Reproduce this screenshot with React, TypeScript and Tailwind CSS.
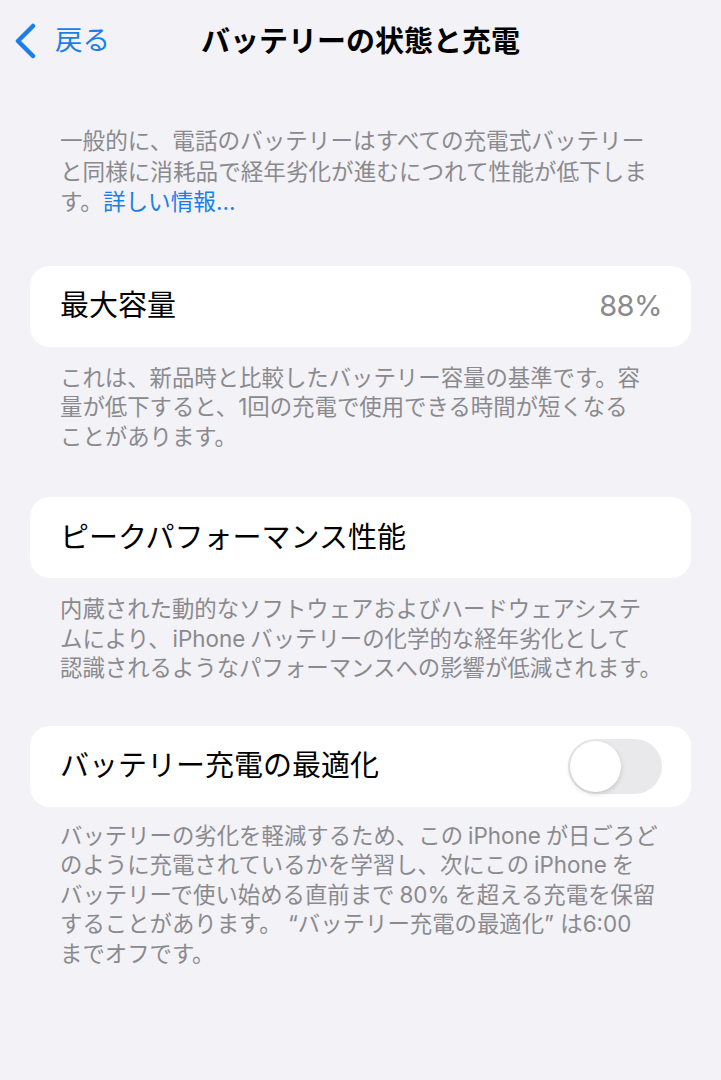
import React from "react";

const font = { fontFamily: 'Inter, "Noto Sans CJK JP", sans-serif' };

function Card({ children }: { children: React.ReactNode }) {
  return (
    <div className="mx-[30px] h-[81px] rounded-[20px] bg-white pl-[30px] pr-[29px] flex items-center justify-between">
      {children}
    </div>
  );
}

function Foot({ lines }: { lines: React.ReactNode[] }) {
  return (
    <div className="px-[60px] text-[22.4px] leading-[29.5px] text-[#8a8a8e] whitespace-nowrap">
      {lines.map((l, i) => (
        <div key={i}>{l}</div>
      ))}
    </div>
  );
}

function L({ children, left = 5 }: { children: React.ReactNode; left?: number }) {
  return <span className={left === 5 ? "px-[5px]" : "pl-[2px] pr-[5px]"}>{children}</span>;
}

export default function App() {
  return (
    <div className="w-[721px] h-[1080px] bg-[#f2f2f7] overflow-hidden" style={font}>
      <div className="h-[82px] grid grid-cols-[1fr_auto_1fr] items-center">
        <div className="flex items-center pl-[15px]">
          <svg width="22" height="36" viewBox="0 0 22 36" fill="none">
            <path d="M18 3 L3 18 L18 33" stroke="#1c7ee8" strokeWidth="4.5" strokeLinecap="round" strokeLinejoin="round" />
          </svg>
          <span className="ml-[18px] text-[27.5px] text-[#1c7ee8] leading-none">戻る</span>
        </div>
        <div className="text-[29px] font-bold text-black leading-none">バッテリーの状態と充電</div>
        <div />
      </div>

      <div className="mt-[44px] px-[60px] text-[22.6px] leading-[30.5px] text-[#8a8a8e] whitespace-nowrap">
        <div>一般的に、電話のバッテリーはすべての充電式バッテリー</div>
        <div>と同様に消耗品で経年劣化が進むにつれて性能が低下しま</div>
        <div>
          す。<span className="text-[#1c7ee8]">詳しい情報...</span>
        </div>
      </div>

      <div className="mt-[48px]">
        <Card>
          <span className="text-[29px] text-black">最大容量</span>
          <span className="text-[29px] text-[#8a8a8e] tracking-[-0.5px]">88%</span>
        </Card>
      </div>
      <div className="mt-[16px]">
        <Foot
          lines={[
            "これは、新品時と比較したバッテリー容量の基準です。容",
            "量が低下すると、1回の充電で使用できる時間が短くなる",
            "ことがあります。",
          ]}
        />
      </div>

      <div className="mt-[46px]">
        <Card>
          <span className="text-[29px] text-black">ピークパフォーマンス性能</span>
        </Card>
      </div>
      <div className="mt-[16px]">
        <Foot
          lines={[
            "内蔵された動的なソフトウェアおよびハードウェアシステ",
            <>
              ムにより、<L left={2}>iPhone</L>バッテリーの化学的な経年劣化として
            </>,
            "認識されるようなパフォーマンスへの影響が低減されます。",
          ]}
        />
      </div>

      <div className="mt-[43px]">
        <Card>
          <span className="text-[29px] text-black">バッテリー充電の最適化</span>
          <div className="w-[94px] h-[55px] rounded-full bg-[#e9e9eb] p-[2px] flex items-center">
            <div className="w-[51px] h-[51px] rounded-full bg-white shadow-[0_2px_5px_rgba(0,0,0,0.15)]" />
          </div>
        </Card>
      </div>
      <div className="mt-[14px]">
        <Foot
          lines={[
            <>
              バッテリーの劣化を軽減するため、この<L>iPhone</L>が日ごろど
            </>,
            <>
              のように充電されているかを学習し、次にこの<L>iPhone</L>を
            </>,
            <>
              バッテリーで使い始める直前まで<L>80%</L>を超える充電を保留
            </>,
            <>
              することがあります。 “バッテリー充電の最適化” は6:00
            </>,
            "までオフです。",
          ]}
        />
      </div>
    </div>
  );
}
